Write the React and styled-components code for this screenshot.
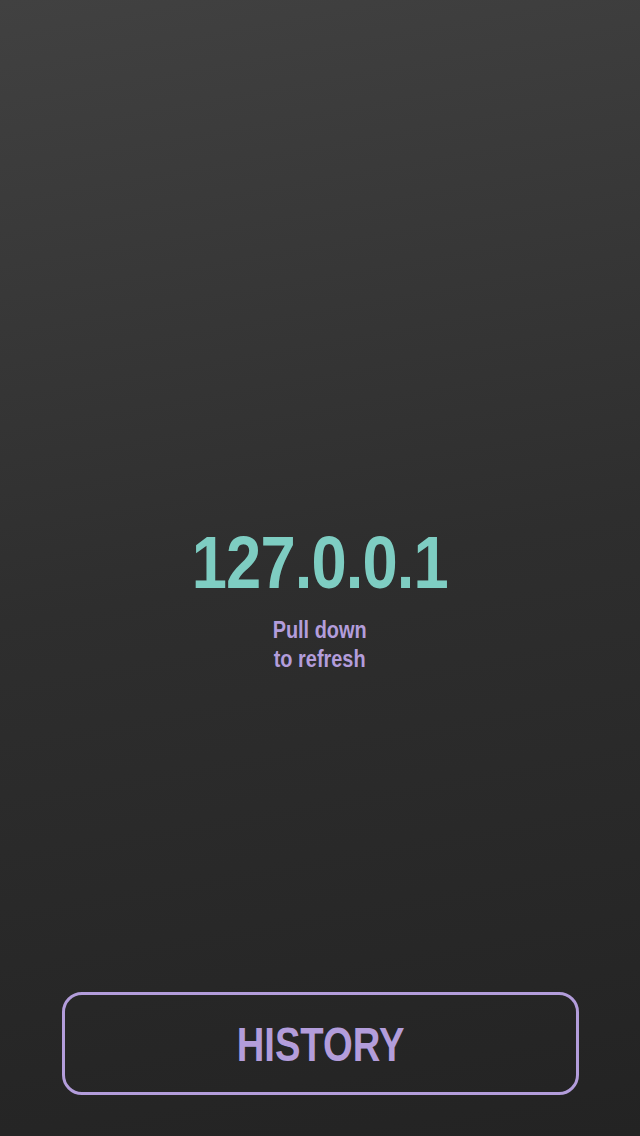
import styled, { createGlobalStyle } from "styled-components";

const GlobalStyle = createGlobalStyle`
	html, body {
		margin: 0;
		padding: 0;
		background: #262626;
	}
	* {
		box-sizing: border-box;
	}
`;

const App = () => {
	return (
		<>
			<GlobalStyle />
			<S.Screen>
				<S.Center>
					<S.Address>127.0.0.1</S.Address>
					<S.Hint>
						Pull down
						<br />
						to refresh
					</S.Hint>
				</S.Center>
				<S.HistoryButton>
					<S.Squeeze $scale={0.78}>HISTORY</S.Squeeze>
				</S.HistoryButton>
			</S.Screen>
		</>
	);
};

export default App;

// no condensed face installed, so squeeze Liberation Sans bold horizontally
const condensed = `
	font-family: "Liberation Sans", Arial, sans-serif;
	font-weight: bold;
`;

const Screen = styled.div`
	width: 640px;
	height: 1136px;
	display: flex;
	flex-direction: column;
	background: linear-gradient(170deg, #414141 0%, #2e2e2e 50%, #232323 100%);
	overflow: hidden;
`;

const Center = styled.div`
	flex: 1;
	display: flex;
	flex-direction: column;
	align-items: center;
	justify-content: center;
	padding-top: 204px;
`;

const Address = styled.h1`
	${condensed}
	margin: 0;
	font-size: 74px;
	line-height: 80px;
	color: #7ecdc2;
	letter-spacing: -1px;
	transform: scaleX(0.855);
`;

const Hint = styled.p`
	${condensed}
	margin: 12px 0 0;
	font-size: 24px;
	line-height: 29px;
	text-align: center;
	color: #b39ddb;
	transform: scaleX(0.83);
`;

const HistoryButton = styled.button`
	${condensed}
	margin: 0 61px 41px 62px;
	height: 103px;
	border: 3px solid #b39ddb;
	border-radius: 20px;
	background: transparent;
	color: #b39ddb;
	font-size: 49px;
	cursor: pointer;
`;

const Squeeze = styled.span`
	display: inline-block;
	transform: scaleX(${({ $scale }) => $scale});
`;

const S = {
	Screen,
	Center,
	Address,
	Hint,
	HistoryButton,
	Squeeze,
};
